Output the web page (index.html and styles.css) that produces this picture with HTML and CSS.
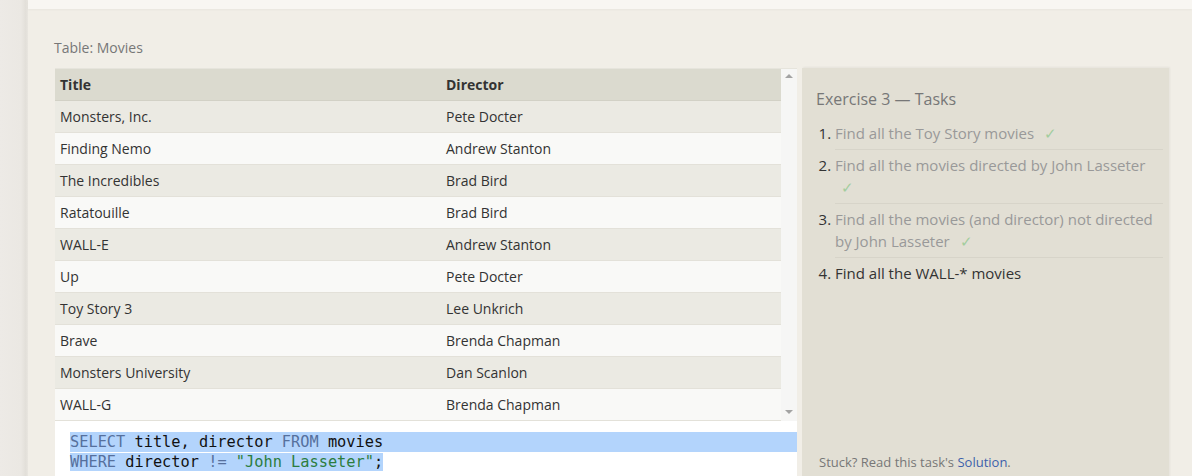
FILE: index.html
```html
<!DOCTYPE html>
<html>
<head>
<meta charset="utf-8">
<link rel="stylesheet" href="styles.css">
</head>
<body>
<div class="page">
  <div class="sidebar"></div>
  <div class="main">
    <div class="topcard"></div>
    <div class="content">
      <div class="caption">Table: Movies</div>
      <div class="row-area">
        <div class="left">
          <div class="table-wrap">
            <div class="table">
              <div class="tr th"><div class="c1">Title</div><div class="c2">Director</div></div>
              <div class="tr odd"><div class="c1">Monsters, Inc.</div><div class="c2">Pete Docter</div></div>
              <div class="tr even"><div class="c1">Finding Nemo</div><div class="c2">Andrew Stanton</div></div>
              <div class="tr odd"><div class="c1">The Incredibles</div><div class="c2">Brad Bird</div></div>
              <div class="tr even"><div class="c1">Ratatouille</div><div class="c2">Brad Bird</div></div>
              <div class="tr odd"><div class="c1">WALL-E</div><div class="c2">Andrew Stanton</div></div>
              <div class="tr even"><div class="c1">Up</div><div class="c2">Pete Docter</div></div>
              <div class="tr odd"><div class="c1">Toy Story 3</div><div class="c2">Lee Unkrich</div></div>
              <div class="tr even"><div class="c1">Brave</div><div class="c2">Brenda Chapman</div></div>
              <div class="tr odd"><div class="c1">Monsters University</div><div class="c2">Dan Scanlon</div></div>
              <div class="tr even"><div class="c1">WALL-G</div><div class="c2">Brenda Chapman</div></div>
            </div>
            <div class="scrollbar">
              <div class="arrow up"></div>
              <div class="arrow down"></div>
            </div>
          </div>
          <div class="code">
            <div class="line sel"><span class="kw">SELECT</span> title, director <span class="kw">FROM</span> movies</div>
            <div class="line"><span class="sel"><span class="kw">WHERE</span> director <span class="kw">!=</span> <span class="str">"John Lasseter"</span>;</span></div>
          </div>
        </div>
        <div class="panel">
          <div class="panel-title">Exercise 3 — Tasks</div>
          <ol class="tasks">
            <li class="done">Find all the Toy Story movies <span class="check">✓</span></li>
            <li class="done">Find all the movies directed by John Lasseter <span class="check">✓</span></li>
            <li class="done">Find all the movies (and director) not directed by John Lasseter <span class="check">✓</span></li>
            <li class="current">Find all the WALL-* movies</li>
          </ol>
          <div class="stuck">Stuck? Read this task's <a class="link">Solution</a>.</div>
        </div>
      </div>
    </div>
  </div>
</div>
</body>
</html>
```

FILE: styles.css
```css
html, body {
  margin: 0;
  padding: 0;
  height: 100%;
  overflow: hidden;
}
body {
  font-family: "Open Sans", "Noto Sans", sans-serif;
  background: #f1eee7;
  color: #333;
}
.page {
  display: flex;
  height: 100%;
}
.sidebar {
  width: 28px;
  flex: none;
  background: linear-gradient(to right, #edeae6 0%, #ebe8e3 75%, #e2dfd9 92%, #e9e6e0 100%);
}
.main {
  flex: 1;
  background: #f1eee7;
  display: flex;
  flex-direction: column;
}
.topcard {
  flex: none;
  height: 9px;
  background: #f8f6f2;
  box-shadow: 0 1px 2px rgba(0,0,0,0.04);
}
.content {
  flex: none;
  padding: 29px 23px 0 26px;
}
.caption {
  font-size: 14px;
  color: #777;
  line-height: 20px;
  height: 30px;
}
.row-area {
  display: flex;
  gap: 5px;
  align-items: stretch;
}
.left {
  width: 742px;
  flex: none;
  margin-left: 1px;
}
.table-wrap {
  display: flex;
  border-top: 1px solid #e6e4dc;
}
.table {
  width: 726px;
}
.tr {
  display: flex;
  height: 32px;
  box-sizing: border-box;
  border-bottom: 1px solid #e3e1d9;
  font-size: 14px;
  line-height: 31px;
}
.tr.th {
  background: #dbdacf;
  font-weight: bold;
  color: #333;
  border-bottom: 1px solid #d2d1c6;
}
.tr.odd { background: #ebeae3; }
.tr.even { background: #f9f9f7; }
.c1 {
  width: 386px;
  padding-left: 5px;
  box-sizing: border-box;
}
.c2 {
  flex: 1;
  padding-left: 5px;
}
.scrollbar {
  width: 16px;
  background: #f6f6f5;
  display: flex;
  flex-direction: column;
  justify-content: space-between;
  align-items: center;
  padding: 5px 0 7px;
  box-sizing: border-box;
}
.arrow {
  width: 0;
  height: 0;
  border-left: 4px solid transparent;
  border-right: 4px solid transparent;
}
.arrow.up { border-bottom: 4px solid #a3a3a3; }
.arrow.down { border-top: 4px solid #a3a3a3; }
.code {
  background: #fff;
  padding: 11px 0 10px 15px;
  font-family: "DejaVu Sans Mono", "Liberation Mono", monospace;
  font-size: 15.3px;
  line-height: 20px;
  color: #111;
}
.line { white-space: pre; }
.sel { background: #b3d4fc; }
.kw { color: #56709d; }
.str { color: #2c7d3e; }
.panel {
  width: 367px;
  flex: none;
  background: #e2dfd4;
  box-shadow: 1px -1px 2px rgba(0,0,0,0.05);
  padding: 19px 6px 10px 14px;
  box-sizing: border-box;
  display: flex;
  flex-direction: column;
}
.panel-title {
  font-size: 16px;
  line-height: 24px;
  color: #777;
}
.tasks {
  margin: 7px 0 0 0;
  padding-left: 19px;
  font-size: 15px;
  line-height: 22px;
}
.tasks li {
  padding: 4px 0 5px 0;
  border-bottom: 1px solid #d7d4c9;
}
.tasks li:last-child { border-bottom: none; }
.tasks li::marker { color: #333; }
.tasks li.done { color: #999; }
.tasks li.current { color: #333; }
.check {
  color: #a3cd9e;
  margin-left: 6px;
}
.stuck {
  margin-top: auto;
  font-size: 13px;
  line-height: 20px;
  color: #777;
  padding-left: 3px;
}
.link { color: #3d5fab; }
```
